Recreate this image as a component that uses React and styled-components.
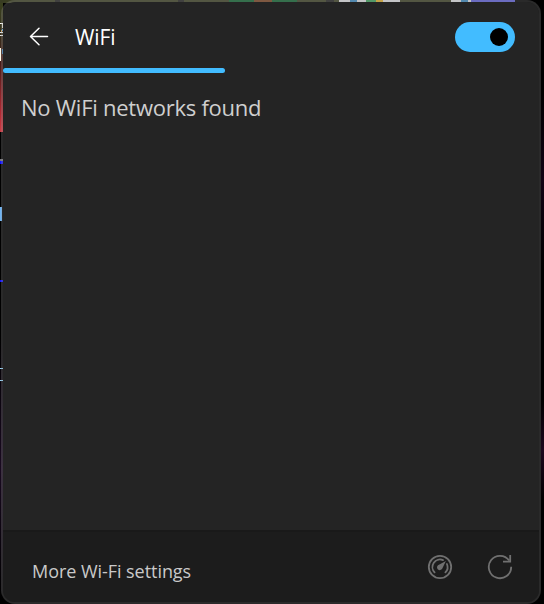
import React from "react";
import styled, { createGlobalStyle } from "styled-components";

const Global = createGlobalStyle`
  * { box-sizing: border-box; }
  html, body { margin: 0; background: #000; overflow: hidden; }
`;

const layer = (color, x, y, w, h) =>
  `linear-gradient(${color}, ${color}) ${x}px ${y}px / ${w}px ${h}px no-repeat`;

const wallpaper = [
  layer("#3a84b8", 350, 0, 7, 2),
  layer("#3a9a56", 366, 0, 10, 2),
  layer("#d6a82a", 376, 0, 7, 2),
  layer("#d4d6d8", 339, 0, 61, 2),
  layer("#3a84b8", 461, 0, 7, 2),
  layer("#d4d6d8", 451, 0, 20, 2),
  layer("#5a5cd0", 471, 0, 44, 2),
  layer("#754020", 254, 0, 18, 2),
  layer("#106030", 229, 0, 68, 2),
  layer("#20211f", 55, 0, 5, 3),
  layer("#20211f", 178, 0, 6, 3),
  layer("#20211f", 326, 0, 8, 3),
  layer("#393d22", 0, 0, 451, 3),
  layer("#ffffff", 0, 23, 3, 1),
  layer("#e0e0d0", 2, 24, 1, 4),
  layer("#d8a060", 1, 30, 1, 2),
  layer("#5fa8e0", 2, 29, 1, 2),
  layer("#e8e8e8", 0, 32, 3, 1),
  layer("#e8e8e8", 0, 35, 3, 1),
  layer("#fff8e8", 0, 48, 1, 13),
  layer("#3f80b8", 2, 49, 1, 5),
  "linear-gradient(#3b421f, #35301c 25%, #491b18 48%, #b02832 85%, #cf3943) 0 0 / 3px 132px no-repeat",
  layer("#77777c", 0, 159, 3, 2),
  layer("#1010ff", 0, 161, 3, 3),
  layer("#6fb4f4", 0, 207, 2, 14),
  layer("#1010ff", 0, 280, 3, 2),
  layer("#94d2f4", 0, 368, 3, 1),
  layer("#94d2f4", 0, 380, 3, 1),
  "linear-gradient(transparent, #190a20 50%, transparent) 0 335px / 3px 265px no-repeat",
  "linear-gradient(transparent, #110414 50%, transparent) 541px 90px / 3px 180px no-repeat",
  "linear-gradient(transparent, #1b081d 50%, transparent) 541px 400px / 3px 100px no-repeat",
  "#000",
].join(", ");

const Desktop = styled.div`
  width: 544px;
  height: 604px;
  padding: 0 3px 0 1px;
  background: ${wallpaper};
  font-family: "Open Sans", "Noto Sans", sans-serif;
`;

const Panel = styled.main`
  height: 604px;
  display: flex;
  flex-direction: column;
  overflow: hidden;
  border: 2px solid rgba(150, 150, 150, 0.28);
  border-radius: 14px;
  background: #242424 padding-box;
`;

const Header = styled.header`
  height: 66px;
  flex: none;
  display: flex;
  align-items: center;
  padding: 4px 24px 0 25px;
`;

const IconButton = styled.button`
  display: flex;
  padding: 0;
  border: 0;
  background: none;
  color: ${(p) => p.$color};
`;

const Title = styled.h1`
  margin: 0 auto 0 23px;
  font-size: 21px;
  line-height: 30px;
  font-weight: 400;
  letter-spacing: -0.1px;
  color: #fff;
`;

const Switch = styled.button`
  width: 60px;
  height: 30px;
  padding: 0 7px;
  display: flex;
  align-items: center;
  justify-content: flex-end;
  border: 0;
  border-radius: 15px;
  background: #42bcff;
`;

const Thumb = styled.span`
  width: 18px;
  height: 18px;
  border-radius: 50%;
  background: #000;
`;

const Progress = styled.div`
  width: 222px;
  height: 5px;
  flex: none;
  border-radius: 2.5px;
  background: #42bcff;
`;

const Content = styled.section`
  flex: 1;
  padding: 19px 18px;
`;

const Message = styled.p`
  margin: 0;
  font-size: 22px;
  line-height: 30px;
  letter-spacing: -0.25px;
  color: #cfcfcf;
`;

const Footer = styled.footer`
  height: 72px;
  flex: none;
  display: flex;
  align-items: center;
  padding: 0 26px 0 29px;
  border-top: 2px solid #191919;
  background: #1c1c1c;
`;

const SettingsLink = styled.span`
  margin-right: auto;
  padding-top: 8px;
  font-size: 18px;
  line-height: 26px;
  letter-spacing: -0.05px;
  color: #c9c9c9;
`;

const Actions = styled.div`
  display: flex;
  gap: 34px;
`;

const BackIcon = () => (
  <svg width="24" height="22" viewBox="0 0 24 22" fill="none" stroke="currentColor" strokeWidth="1.5" strokeLinecap="round" strokeLinejoin="round">
    <path d="M19.5 10.5H2.7M11 2.3L2.5 10.5L11 18.7" />
  </svg>
);

const GaugeIcon = () => (
  <svg width="26" height="26" viewBox="0 0 26 26" fill="none" stroke="currentColor" strokeWidth="1.8" strokeLinecap="round">
    <circle cx="13" cy="13" r="11.2" />
    <path d="M7.6 18.4A7.6 7.6 0 0 1 16 6.1M19.9 10A7.6 7.6 0 0 1 18.4 18.4" />
    <path d="M18.9 6.9L11 11.2A2.8 2.8 0 1 0 15.2 14.8Z" fill="currentColor" stroke="none" />
  </svg>
);

const RefreshIcon = () => (
  <svg width="26" height="26" viewBox="0 0 26 26" fill="none" stroke="currentColor" strokeWidth="1.8">
    <path d="M24.2 12.8A11.2 11.2 0 1 1 22.2 6.6" />
    <path d="M23.2 1V7.7H16" />
  </svg>
);

export default function App() {
  return (
    <Desktop>
      <Global />
      <Panel>
        <Header>
          <IconButton $color="#fff" aria-label="Back"><BackIcon /></IconButton>
          <Title>WiFi</Title>
          <Switch role="switch" aria-checked="true" aria-label="WiFi"><Thumb /></Switch>
        </Header>
        <Progress />
        <Content><Message>No WiFi networks found</Message></Content>
        <Footer>
          <SettingsLink>More Wi-Fi settings</SettingsLink>
          <Actions>
            <IconButton $color="#707070" aria-label="Speed test"><GaugeIcon /></IconButton>
            <IconButton $color="#707070" aria-label="Refresh"><RefreshIcon /></IconButton>
          </Actions>
        </Footer>
      </Panel>
    </Desktop>
  );
}
